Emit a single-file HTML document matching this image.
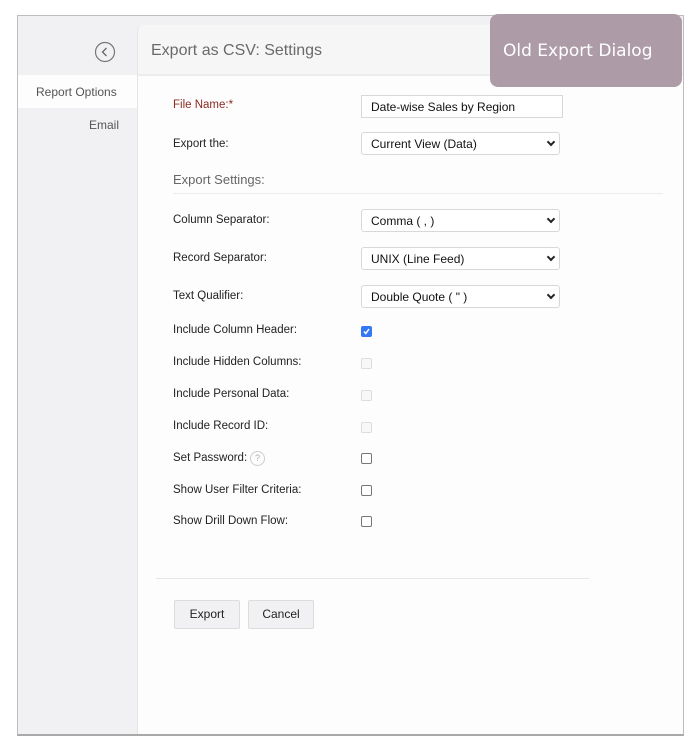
<!DOCTYPE html>
<html><head><style>
*{box-sizing:border-box;margin:0;padding:0}
body{width:700px;height:750px;background:#fff;position:relative;font-family:"Liberation Sans",Arial,sans-serif;overflow:hidden}
.frame{position:absolute;left:17px;top:15px;width:667px;height:721px;border:1px solid #bdbdbd;border-bottom:2px solid #a9a9a9;background:#f1f1f3}
.main{position:absolute;left:137px;top:25px;width:546px;height:709px;background:#fdfdfd;border-left:1px solid #e4e4e4;border-top-left-radius:6px}
.hdr{position:absolute;left:0;top:0;width:100%;height:51px;background:#f6f6f7;border-bottom:2px solid #ececec;border-top-left-radius:6px;font-size:16px;color:#6a6a6a;padding:17px 0 0 13px}
.side-sel{position:absolute;left:18px;top:75px;width:119px;height:33px;background:#fdfdfd}
.abs{position:absolute;font-size:12px;color:#222}
.lbl{position:absolute;left:173px;font-size:11.5px;color:#222}
.sel,.inp{position:absolute;left:361px;width:199px;height:23px;border:1px solid #d8d8d8;border-radius:3px;background:#fff;font-size:12px;color:#111;padding:4px 0 0 9px}
.inp{border-radius:0;width:202px}
.sel:after{content:"";position:absolute;right:5px;top:6px;width:4px;height:4px;border-right:2px solid #222;border-bottom:2px solid #222;transform:rotate(45deg)}
.cb{position:absolute;left:361px;width:11px;height:11px;border:1px solid #777;border-radius:2px;background:#fff}
.cb.dis{border-color:#ddd;background:#f8f8f8}
.cb.on{background:#3478f6;border-color:#3478f6}
.btn{position:absolute;top:600px;width:66px;height:29px;border:1px solid #dcdcdc;border-radius:2px;background:#f1f1f3;font-size:12px;color:#222;text-align:center;line-height:27px}
.tag{position:absolute;left:490px;top:14px;width:192px;height:73px;background:#ad9ba7;border-radius:8px;color:#fff;font-family:"DejaVu Sans",sans-serif;font-size:17px;padding:27px 0 0 13px}
</style></head><body>
<div class="frame"></div>
<div class="side-sel"></div>
<svg style="position:absolute;left:94px;top:41px" width="22" height="22" viewBox="0 0 22 22"><circle cx="11" cy="11" r="9.5" fill="none" stroke="#777" stroke-width="1.2"/><path d="M12.5 7 L8.5 11 L12.5 15" fill="none" stroke="#666" stroke-width="1.3"/></svg>
<div class="abs" style="left:36px;top:85px;color:#555;font-size:12px">Report Options</div>
<div class="abs" style="left:89px;top:118px;color:#555;font-size:12px">Email</div>
<div class="main"><div class="hdr">Export as CSV: Settings</div></div>
<div class="lbl" style="top:99px;color:#8b2a22">File Name:*</div>
<div class="inp" style="top:95px">Date-wise Sales by Region</div>
<div class="lbl" style="top:138px">Export the:</div>
<div class="sel" style="top:132px">Current View (Data)</div>
<div class="abs" style="left:173px;top:172px;font-size:13px;color:#666">Export Settings:</div>
<div style="position:absolute;left:173px;top:193px;width:490px;height:1px;background:#ececec"></div>
<div class="lbl" style="top:214px">Column Separator:</div>
<div class="sel" style="top:209px">Comma ( , )</div>
<div class="lbl" style="top:252px">Record Separator:</div>
<div class="sel" style="top:247px">UNIX (Line Feed)</div>
<div class="lbl" style="top:290px">Text Qualifier:</div>
<div class="sel" style="top:285px">Double Quote ( " )</div>
<div class="lbl" style="top:324px">Include Column Header:</div>
<div class="cb on" style="top:326px"><svg width="9" height="9" viewBox="0 0 9 9" style="position:absolute;left:0;top:0"><path d="M2 4.5 L3.8 6.5 L7 2" fill="none" stroke="#fff" stroke-width="1.5"/></svg></div>
<div class="lbl" style="top:356px">Include Hidden Columns:</div>
<div class="cb dis" style="top:358px"></div>
<div class="lbl" style="top:388px">Include Personal Data:</div>
<div class="cb dis" style="top:390px"></div>
<div class="lbl" style="top:420px">Include Record ID:</div>
<div class="cb dis" style="top:422px"></div>
<div class="lbl" style="top:452px">Set Password:</div>
<div style="position:absolute;left:250px;top:451px;width:15px;height:15px;border:1px solid #ccc;border-radius:50%;font-size:9px;color:#aaa;text-align:center;line-height:13px">?</div>
<div class="cb" style="top:453px"></div>
<div class="lbl" style="top:484px">Show User Filter Criteria:</div>
<div class="cb" style="top:485px"></div>
<div class="lbl" style="top:515px">Show Drill Down Flow:</div>
<div class="cb" style="top:516px"></div>
<div style="position:absolute;left:156px;top:578px;width:433px;height:1px;background:#e6e6ea"></div>
<div class="btn" style="left:174px">Export</div>
<div class="btn" style="left:248px">Cancel</div>
<div class="tag">Old Export Dialog</div>
</body></html>
